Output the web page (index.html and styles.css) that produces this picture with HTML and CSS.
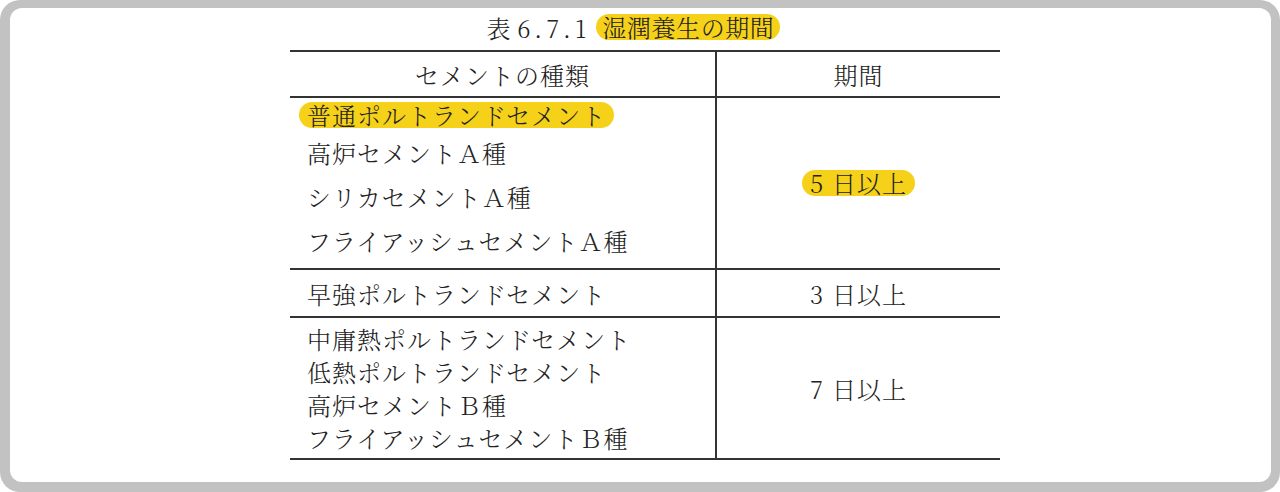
FILE: index.html
```html
<!DOCTYPE html>
<html lang="ja">
<head>
<meta charset="utf-8">
<title>表 6.7.1 湿潤養生の期間</title>
<link rel="stylesheet" href="styles.css">
</head>
<body>
<div class="frame">
  <div class="card">
    <div class="caption">
      <span>表</span><span class="num">6.7.1</span><mark class="hl">湿潤養生の期間</mark>
    </div>
    <div class="tbl">
      <div class="row head">
        <div class="cell left center">セメントの種類</div>
        <div class="cell right">期間</div>
      </div>
      <div class="row r1">
        <div class="cell left list">
          <div class="line first"><mark class="hl">普通ポルトランドセメント</mark></div>
          <div class="line wide">高炉セメントＡ種</div>
          <div class="line wide">シリカセメントＡ種</div>
          <div class="line wide">フライアッシュセメントＡ種</div>
        </div>
        <div class="cell right"><mark class="hl"><span class="digit">5</span>日以上</mark></div>
      </div>
      <div class="row r2">
        <div class="cell left single">早強ポルトランドセメント</div>
        <div class="cell right"><span class="digit">3</span>日以上</div>
      </div>
      <div class="row r3">
        <div class="cell left list tight">
          <div class="line">中庸熱ポルトランドセメント</div>
          <div class="line">低熱ポルトランドセメント</div>
          <div class="line">高炉セメントＢ種</div>
          <div class="line">フライアッシュセメントＢ種</div>
        </div>
        <div class="cell right"><span class="digit">7</span>日以上</div>
      </div>
    </div>
  </div>
</div>
</body>
</html>
```
FILE: styles.css
```css
html, body {
  margin: 0;
  padding: 0;
  background: #ffffff;
}

body {
  font-family: "Noto Serif CJK JP", "Noto Sans CJK JP", serif;
  font-weight: 300;
  color: #222222;
  font-size: 24px;
  letter-spacing: 1px;
}

.frame {
  box-sizing: border-box;
  width: 1280px;
  height: 492px;
  padding: 8px 9px 10px 10px;
  background: #c2c2c2;
  border-radius: 20px;
}

.card {
  box-sizing: border-box;
  height: 100%;
  background: #ffffff;
  border-radius: 12px;
}

.caption {
  height: 42px;
  box-sizing: border-box;
  padding-bottom: 4px;
  padding-right: 14px;
  display: flex;
  justify-content: center;
  align-items: center;
  letter-spacing: 0.6px;
}

.num {
  margin-left: 6px;
  margin-right: 6px;
  letter-spacing: 4px;
}

.hl {
  display: inline-block;
  background: #f6d11a;
  color: #222222;
  height: 26px;
  line-height: 26px;
  padding: 0 8px;
  border-radius: 13px;
}

.caption .hl {
  padding: 0 6px;
}

.tbl {
  width: 710px;
  margin-left: 280px;
  border-top: 2px solid #333333;
  border-bottom: 2px solid #333333;
}

.row {
  display: grid;
  grid-template-columns: 427px 283px;
  border-bottom: 2px solid #333333;
}

.row.r3 {
  border-bottom: none;
}

.head { height: 44px; }
.r1 { height: 170px; }
.r2 { height: 46px; }
.r3 { height: 140px; }

.cell {
  box-sizing: border-box;
}

.cell.left {
  border-right: 2px solid #333333;
  padding-left: 17px;
}

.cell.center {
  display: flex;
  align-items: center;
  justify-content: center;
  padding-left: 0;
}

.cell.single {
  display: flex;
  align-items: center;
}

.cell.right {
  display: flex;
  align-items: center;
  justify-content: center;
}

.list {
  display: flex;
  flex-direction: column;
  padding-top: 2px;
}

.list .line {
  height: 44px;
  display: flex;
  align-items: center;
  white-space: nowrap;
}

.list .line.first {
  height: 30px;
  margin-left: -8px;
}

.list.tight {
  padding-top: 4px;
}

.list.tight .line {
  height: 33px;
}

.digit {
  margin-right: 8px;
}
```
